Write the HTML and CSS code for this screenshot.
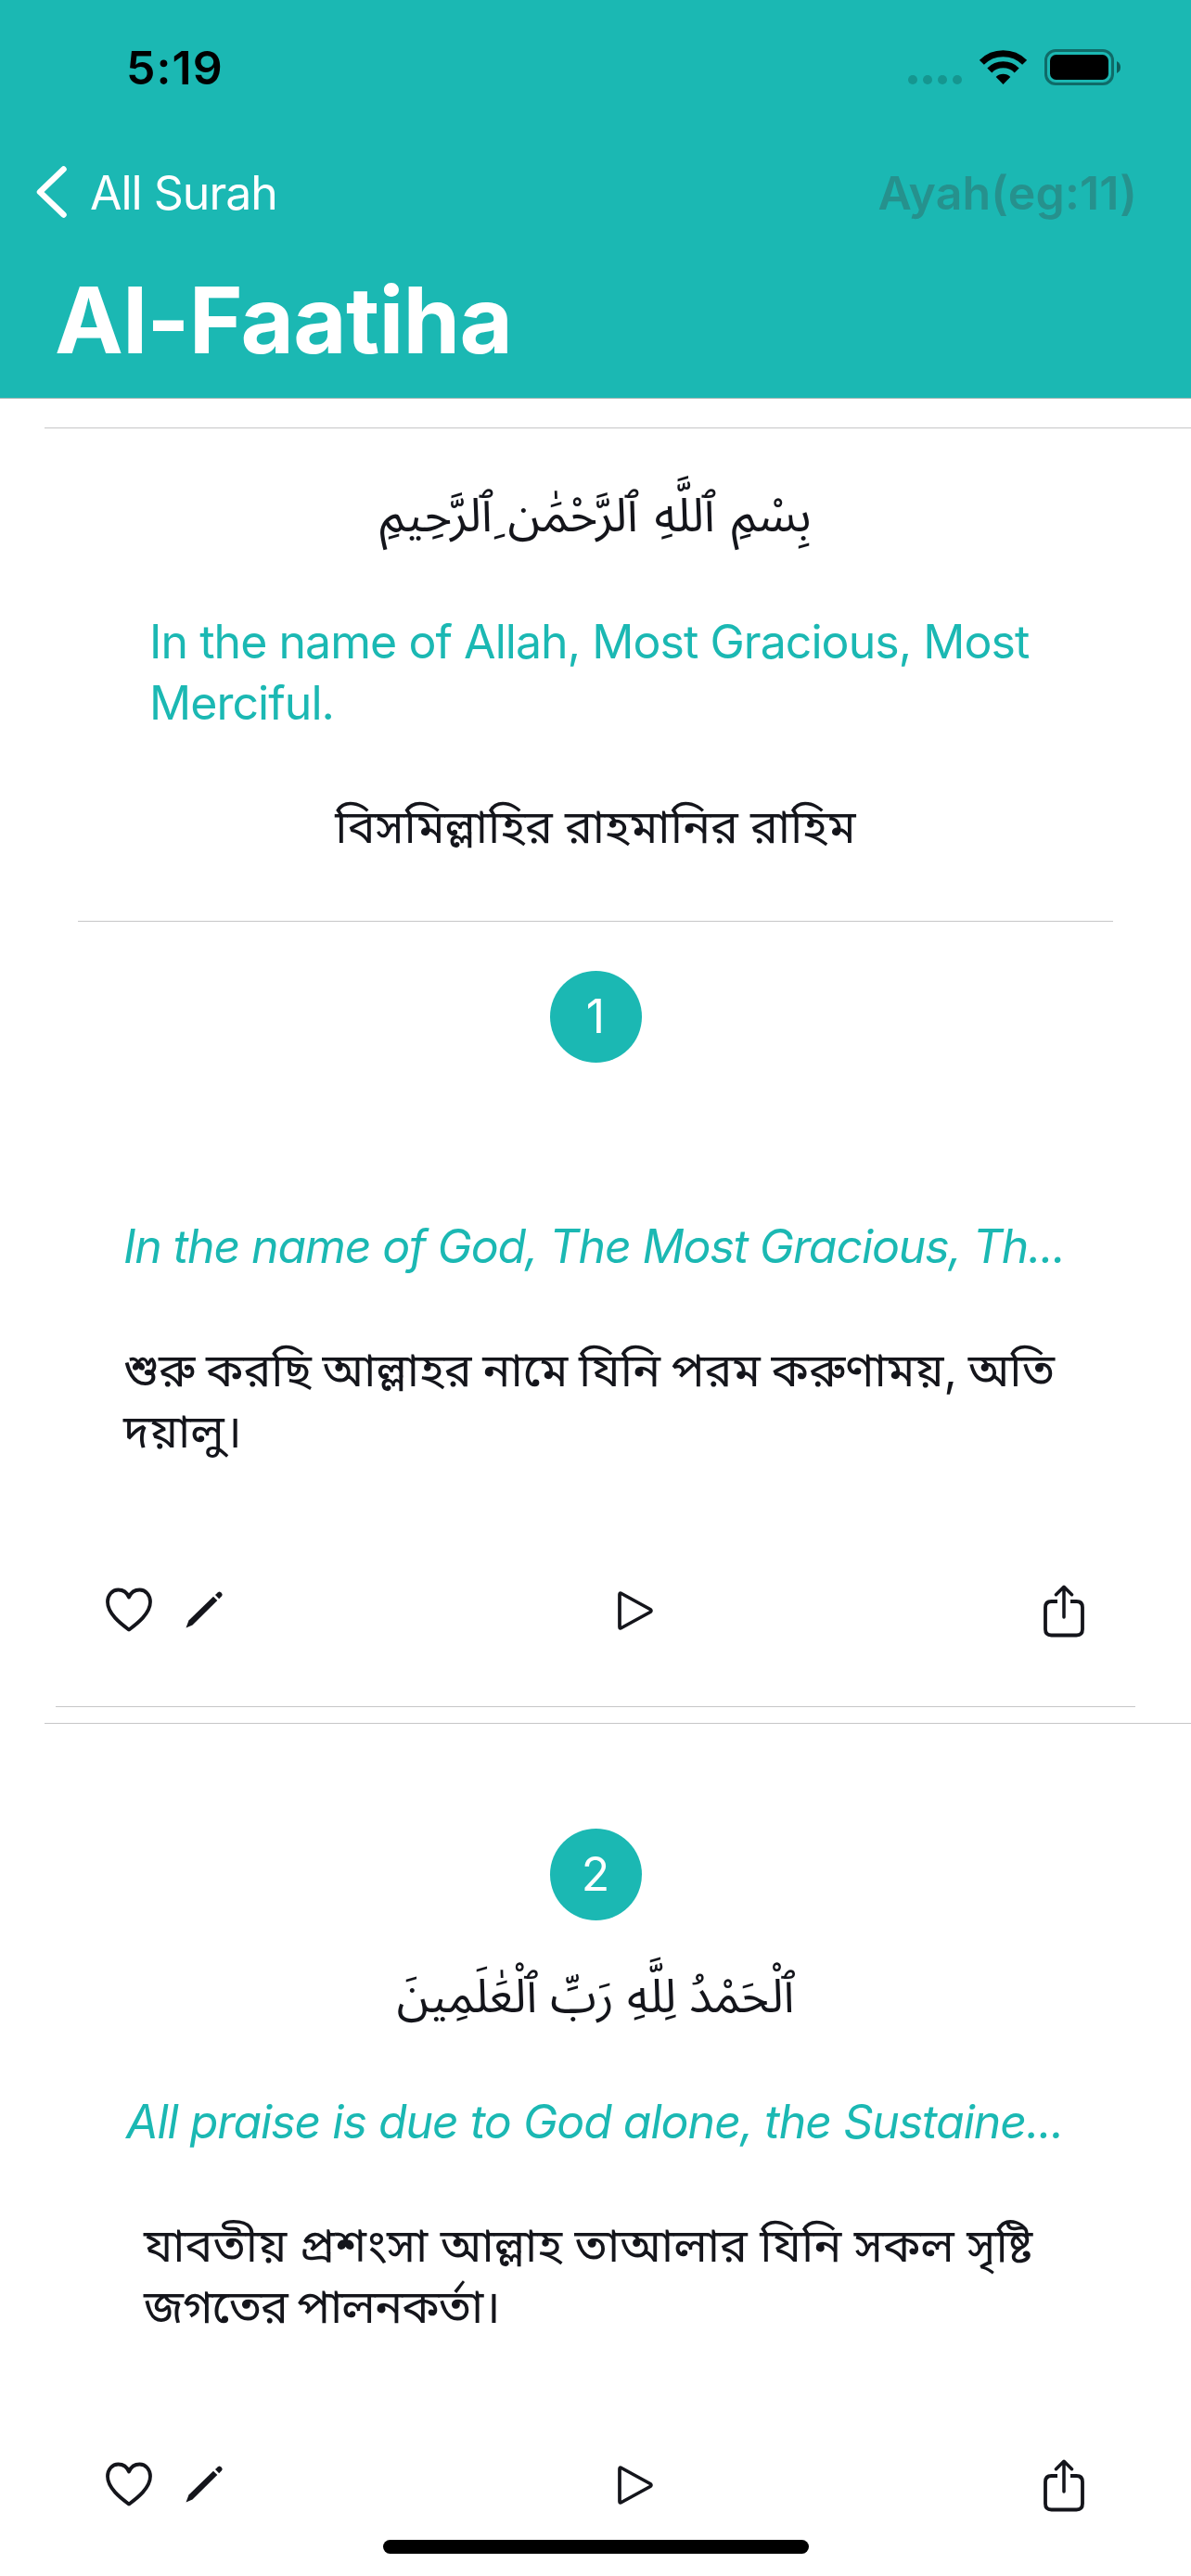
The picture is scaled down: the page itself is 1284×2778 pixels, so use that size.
FILE: index.html
```html
<!DOCTYPE html>
<html lang="en">
<head>
<meta charset="utf-8">
<title>Al-Faatiha</title>
<link rel="stylesheet" href="styles.css">
</head>
<body>
<svg width="0" height="0" class="defs">
  <symbol id="heart" viewBox="0 0 50 48"><path d="M25 45.500C17 39.500 2 28.500 2 15.500C2 8 7 2.500 13.500 2.500C19 2.500 23 5.500 25 10.500C27 5.500 31 2.500 36.500 2.500C43 2.500 48 8 48 15.500C48 28.500 33 39.500 25 45.500Z" fill="none" stroke="currentColor" stroke-width="3.800" stroke-linejoin="round"/></symbol>
  <symbol id="pencil" viewBox="0 0 40 40"><path d="M0.500 39.500L3.500 31.500L30 5.800L34.300 10L7.500 36.500Z" fill="currentColor"/><path d="M32 4L35 1.200Q36.500 0 38 1.200L39 2.200Q40.300 3.800 39 5.200L36.200 8.200Z" fill="currentColor"/></symbol>
  <symbol id="play" viewBox="0 0 40 44"><path d="M3 4.500Q3 2.200 5 3.500L36 20.500Q38 22 36 23.500L5 40.500Q3 41.800 3 39.500Z" fill="none" stroke="currentColor" stroke-width="3.700" stroke-linejoin="round"/></symbol>
  <symbol id="share" viewBox="0 0 44 57"><path d="M15 18H8.500Q2 18 2 24.500V48Q2 54.500 8.500 54.500H35.500Q42 54.500 42 48V24.500Q42 18 35.500 18H29" fill="none" stroke="currentColor" stroke-width="3.800"/><path d="M22 35V2.500M13.500 10.700L22 2.300L30.500 10.700" fill="none" stroke="currentColor" stroke-width="3.500" stroke-linecap="round" stroke-linejoin="round"/></symbol>
</svg>
<header class="header">
  <div class="status">
    <span class="time">5:19</span>
    <span class="dots"><i></i><i></i><i></i><i></i></span>
    <svg class="wifi" viewBox="0 0 51 37"><g fill="none" stroke="#000"><path d="M2.400 13.300A32.800 32.800 0 0 1 48.600 13.300" stroke-width="7"/><path d="M10.800 22A20.700 20.700 0 0 1 40.200 22" stroke-width="7"/></g><path d="M25.500 37L17.700 29A11.200 11.200 0 0 1 33.300 29Z"/></svg>
    <svg class="battery" viewBox="0 0 82 39"><rect x="1.500" y="1.500" width="72" height="36" rx="10.500" fill="none" stroke="#000" stroke-opacity=".42" stroke-width="3"/><rect x="6" y="6" width="63" height="27" rx="6.500"/><path d="M78 13Q82 15 82 19.500T78 26Z" fill-opacity=".5"/></svg>
  </div>
  <nav class="nav">
    <svg class="chevron" viewBox="0 0 33 56"><path d="M29.500 3.500L4 28L29.500 52.500" fill="none" stroke="#fff" stroke-width="6.500" stroke-linecap="round" stroke-linejoin="round"/></svg>
    <span class="back">All Surah</span>
    <span class="search">Ayah(eg:11)</span>
  </nav>
  <h1 class="title">Al-Faatiha</h1>
</header>
<main>
  <section class="intro">
    <p class="arabic" lang="ar" dir="rtl">بِسْمِ ٱللَّهِ ٱلرَّحْمَٰن ِٱلرَّحِيمِ</p>
    <p class="english">In the name of Allah, Most Gracious, Most<br>Merciful.</p>
    <p class="bangla" lang="bn">বিসমিল্লাহির রাহমানির রাহিম</p>
  </section>
  <article class="ayah first">
    <div class="number">1</div>
    <p class="translation">In the name of God, The Most Gracious, Th...</p>
    <p class="bangla" lang="bn">শুরু করছি আল্লাহর নামে যিনি পরম করুণাময়, অতি<br>দয়ালু।</p>
    <div class="actions">
      <svg class="heart"><use href="#heart"/></svg><svg class="pencil"><use href="#pencil"/></svg><svg class="play"><use href="#play"/></svg><svg class="share"><use href="#share"/></svg>
    </div>
  </article>
  <article class="ayah second">
    <div class="number">2</div>
    <p class="arabic" lang="ar" dir="rtl">ٱلْحَمْدُ لِلَّهِ رَبِّ ٱلْعَٰلَمِينَ</p>
    <p class="translation">All praise is due to God alone, the Sustaine...</p>
    <p class="bangla" lang="bn">যাবতীয় প্রশংসা আল্লাহ তাআলার যিনি সকল সৃষ্টি<br><span class="tight">জগতের পালনকর্তা।</span></p>
    <div class="actions">
      <svg class="heart"><use href="#heart"/></svg><svg class="pencil"><use href="#pencil"/></svg><svg class="play"><use href="#play"/></svg><svg class="share"><use href="#share"/></svg>
    </div>
  </article>
</main>
<div class="home"></div>
</body>
</html>
```
FILE: styles.css
```css
* { box-sizing: border-box; }
body {
  position: relative;
  width: 1284px;
  height: 2778px;
  margin: 0;
  overflow: hidden;
  background: #fff;
  color: #14151b;
  font-family: Inter, "Noto Sans Bengali", "Noto Sans Arabic", "Noto Sans", sans-serif;
  font-size: 50px;
  line-height: 66px;
}
p, h1 { margin: 0; white-space: nowrap; }
.defs { position: absolute; }

.header { height: 430px; background: #1bb8b3; border-bottom: 1px solid #a2b6b5; color: #fff; }
.status { display: flex; align-items: flex-start; height: 141px; padding: 40px 76px 0 136px; color: #000; }
.time { margin-right: auto; font-weight: 600; letter-spacing: 1.1px; }
.dots { display: flex; gap: 6px; margin: 41px 19px 0 0; }
.dots i { width: 10px; height: 10px; border-radius: 50%; background: #159690; }
.wifi { width: 51px; height: 37px; margin: 14px 19px 0 0; }
.battery { width: 82px; height: 39px; margin-top: 13px; }
.nav { display: flex; align-items: flex-start; height: 142px; padding: 34px 58px 0 39px; }
.chevron { width: 33px; height: 56px; margin: 4px 25px 0 0; }
.back { margin-right: auto; letter-spacing: -1px; }
.search { font-weight: 600; color: #26918d; letter-spacing: 0.15px; }
.title { padding-left: 59px; font-size: 99px; font-weight: 700; line-height: 124px; letter-spacing: -0.75px; }

.intro { margin: 31px 0 0 48px; padding: 60px 48px 0 0; border-top: 1px solid #c6c6c8; text-align: center; }
.arabic { text-align: center; font-size: 50.5px; }
.intro .arabic { font-size: 51px; word-spacing: 3.5px; }
.english { margin: 71px 0 0 113px; color: #1bb8b3; text-align: left; letter-spacing: -0.95px; }
.intro .bangla { margin-top: 67px; word-spacing: -1px; }

.ayah { display: flex; flex-direction: column; align-items: stretch; }
.number { align-self: center; width: 99px; height: 99px; border-radius: 50%; background: #1bb8b3; color: #fff; line-height: 99px; text-align: center; }
.translation { color: #1bb8b3; font-style: italic; }
.first { height: 848px; margin: 69px 60px 0; border-bottom: 1px solid #c6c6c8; }
.first::before { content: ""; height: 1px; margin: 0 24px 53px; background: #c6c6c8; flex: none; }
.first .translation { margin: 165px 0 0 73px; letter-spacing: -1.13px; }
.first .bangla { margin: 67px 0 0 73px; word-spacing: -2.4px; }
.first .actions { margin: 133px 0 0 54px; }
.second { margin: 17px 0 0 48px; padding-top: 113px; border-top: 1px solid #c6c6c8; }
.second .number { margin-right: 48px; }
.second .arabic { margin: 48px 48px 0 0; }
.second .translation { margin: 70px 0 0 88px; letter-spacing: -1.01px; }
.second .bangla { margin: 67px 0 0 107px; word-spacing: -0.6px; }
.second .tight { letter-spacing: -0.9px; word-spacing: -3px; }
.second .actions { margin: 132px 0 0 66px; }

.actions { display: flex; align-items: flex-start; height: 57px; }
.actions svg { flex: none; }
.heart { width: 50px; height: 48px; margin-top: 3px; }
.pencil { width: 40px; height: 40px; margin: 7px 0 0 36px; }
.play { width: 40px; height: 44px; margin: 6px 0 0 425px; }
.share { width: 44px; height: 57px; margin-left: 420px; }

.home { position: absolute; left: 413px; bottom: 24px; width: 459px; height: 15px; border-radius: 8px; background: #000; }
```
